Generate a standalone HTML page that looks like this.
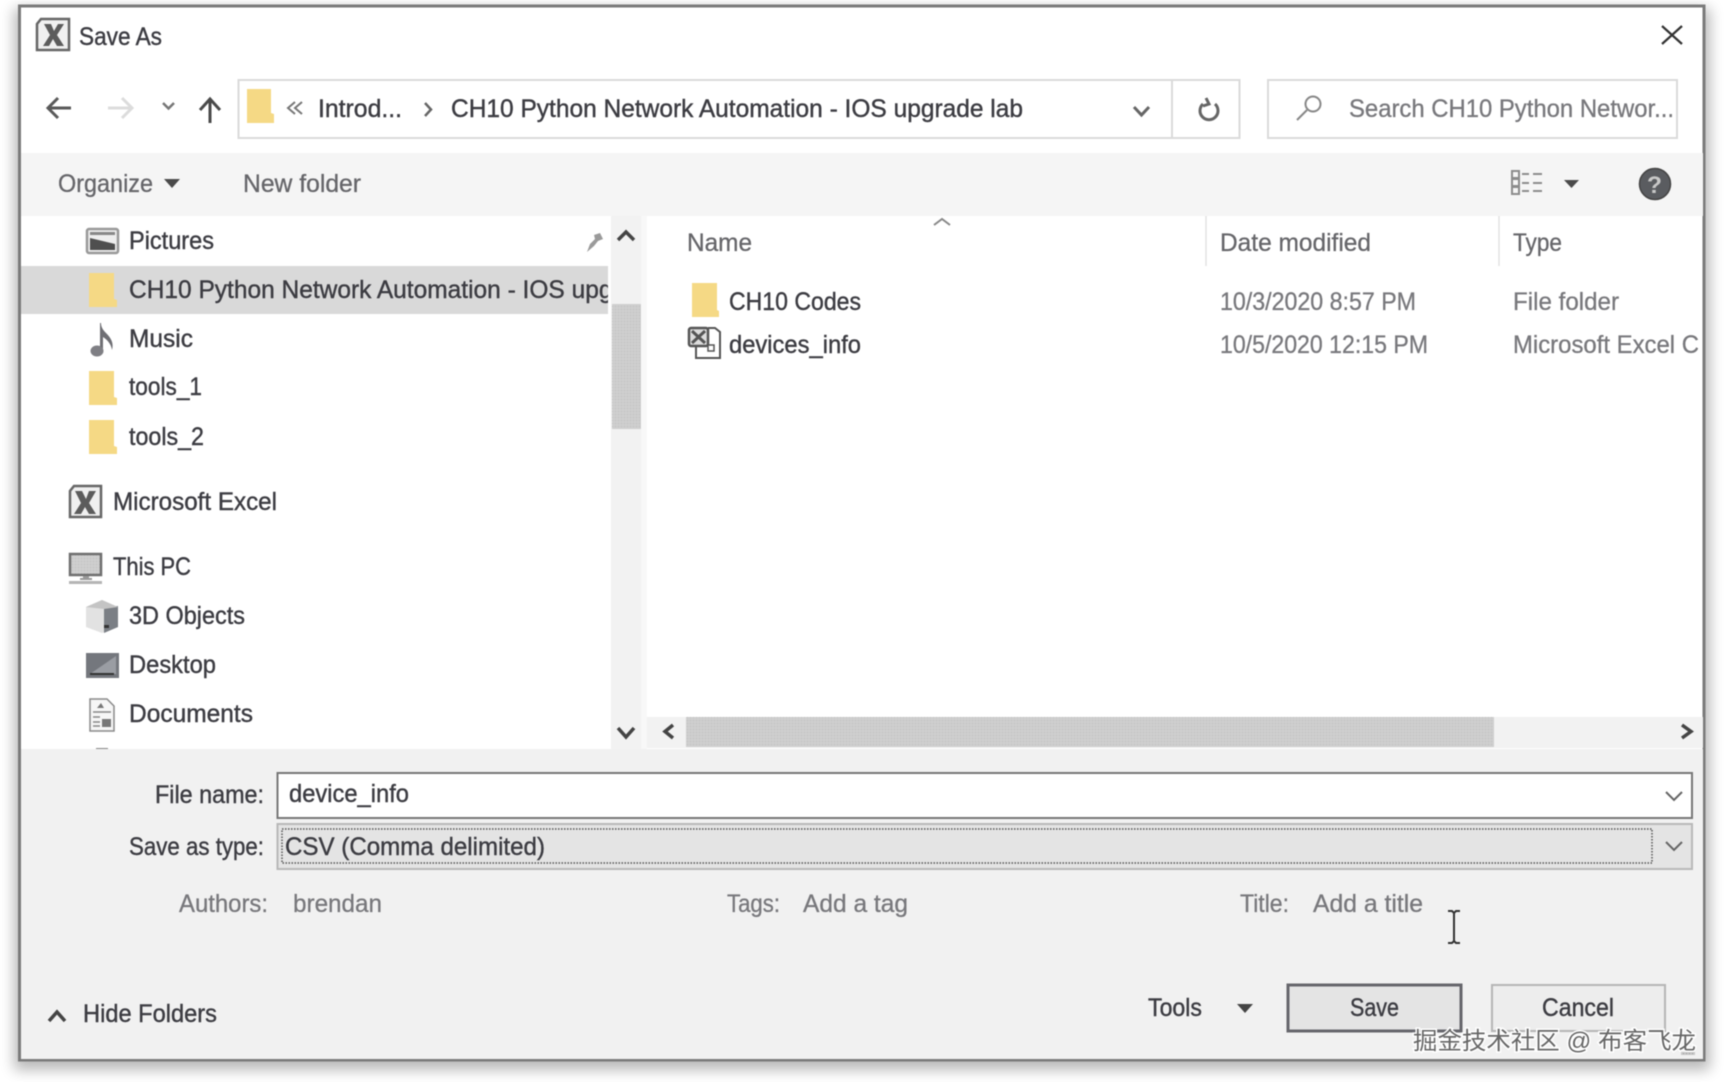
<!DOCTYPE html>
<html><head><meta charset="utf-8"><title>Save As</title>
<style>
html,body{margin:0;padding:0;background:#fff;width:1725px;height:1082px;overflow:hidden}
svg{display:block;filter:blur(.5px)}
text{font-family:"Liberation Sans","Noto Sans CJK SC",sans-serif;font-size:25px;fill:#3c3c42;stroke:#3c3c42;stroke-width:.4px}
.g{fill:#78787c;stroke:#78787c;stroke-width:.3px}
.h{fill:#66666a;stroke:#66666a;stroke-width:.3px}
.c{fill:none;stroke:#444;stroke-width:3.500}
.f{fill:#f5d985}
</style></head><body>
<svg width="1725" height="1082" viewBox="0 0 1725 1082" xmlns="http://www.w3.org/2000/svg">
<defs>
<filter id="sh" x="-5%" y="-5%" width="110%" height="110%"><feGaussianBlur stdDeviation="7"/></filter>
<clipPath id="side"><rect x="21" y="216" width="587" height="533"/></clipPath>
<clipPath id="right"><rect x="1500" y="216" width="198" height="500"/></clipPath>
<pattern id="dots" width="3" height="3" patternUnits="userSpaceOnUse"><rect width="3" height="3" fill="#cfcfcf"/><rect width="1" height="1" fill="#bdbdbd"/></pattern>
<pattern id="dk" width="3" height="3" patternUnits="userSpaceOnUse"><rect width="3" height="3" fill="#c8c8c8"/><rect width="1" height="1" fill="#999"/></pattern>
</defs>

<!-- shadow -->
<rect x="14" y="8" width="1696" height="1062" fill="#000" opacity=".28" filter="url(#sh)"/>
<!-- dialog -->
<rect x="19.500" y="6" width="1684.500" height="1054" fill="#fff" stroke="#7a7a7a" stroke-width="3"/>
<!-- toolbar -->
<rect x="21" y="153" width="1682" height="63" fill="#f5f5f5"/>
<!-- footer -->
<rect x="21" y="749" width="1682" height="310" fill="#f1f1f1"/>
<rect x="641" y="216" width="6" height="533" fill="#f8f8f8"/>

<!-- title -->
<path d="M41 19h28v31H37V24z" fill="#f0f0f0" stroke="#666" stroke-width="2.500"/>
<path d="M44 24h7l3 7 4-7h6l-7 11 7 11h-7l-4-7-4 7h-6l7-11z" fill="#5c5c5c"/>
<text x="79" y="45" textLength="83" lengthAdjust="spacingAndGlyphs">Save As</text>
<path d="M1662 26l20 18M1682 26l-20 18" fill="none" stroke="#333" stroke-width="2.200"/>

<!-- nav -->
<path d="M71 108H49M58 98l-10 10 10 10" fill="none" stroke="#5a5a5a" stroke-width="3"/>
<path d="M108 108h23M122 98l10 10-10 10" fill="none" stroke="#dcdcdc" stroke-width="3"/>
<path d="M163 103l5.500 5.500 5.500-5.500" fill="none" stroke="#777" stroke-width="2.500"/>
<path d="M210 123V100M200 110l10-11 10 11" fill="none" stroke="#4a4a4a" stroke-width="3"/>

<!-- address -->
<rect x="238.500" y="80" width="1001" height="58" fill="#fff" stroke="#dadada" stroke-width="2"/>
<line x1="1172" y1="80" x2="1172" y2="138" stroke="#dadada" stroke-width="2"/>
<path class="f" d="M247 89h24v24l3 1v9h-27z"/>
<path d="M295 102l-7 6 7 6M302 102l-7 6 7 6" fill="none" stroke="#777" stroke-width="2"/>
<text x="318" y="117" textLength="84" lengthAdjust="spacingAndGlyphs">Introd...</text>
<path d="M425 103l6 6.500-6 6.500" fill="none" stroke="#666" stroke-width="2.500"/>
<text x="451" y="117" textLength="572" lengthAdjust="spacingAndGlyphs">CH10 Python Network Automation - IOS upgrade lab</text>
<path d="M1134 107l7.500 8 7.500-8" fill="none" stroke="#666" stroke-width="3"/>
<path d="M1203 104a9 9 0 1 0 12 0M1206 98l3 6-6 2" fill="none" stroke="#666" stroke-width="3"/>

<!-- search -->
<rect x="1268" y="80" width="409" height="58" fill="#fff" stroke="#dadada" stroke-width="2"/>
<circle cx="1313" cy="104" r="7.500" fill="none" stroke="#888" stroke-width="2"/>
<path d="M1307 110l-10 10" stroke="#888" stroke-width="2"/>
<text class="g" x="1349" y="117" textLength="325" lengthAdjust="spacingAndGlyphs">Search CH10 Python Networ...</text>

<!-- toolbar items -->
<text x="58" y="192" textLength="95" lengthAdjust="spacingAndGlyphs" class="h">Organize</text>
<path d="M164 179h16l-8 9z" fill="#4a4a4a"/>
<text x="243" y="192" textLength="118" lengthAdjust="spacingAndGlyphs" class="h">New folder</text>
<g fill="none" stroke="#8c8c8c" stroke-width="2"><rect x="1512" y="171" width="7" height="7"/><rect x="1512" y="179" width="7" height="7"/><rect x="1512" y="187" width="7" height="7"/><path d="M1522 174h7M1533 174h9M1522 183h7M1533 183h9M1522 191h7M1533 191h9"/></g>
<path d="M1564 180h15l-7.500 8z" fill="#4a4a4a"/>
<circle cx="1655" cy="184" r="15.500" fill="#5a5c60" stroke="#444" stroke-width="1.500"/>
<text x="1647" y="193" style="font-size:24px;font-weight:bold;fill:#c8c8c8;stroke:none" textLength="15" lengthAdjust="spacingAndGlyphs">?</text>

<!-- sidebar -->
<rect x="21" y="266" width="587" height="48" fill="#d9d9d9"/>
<g clip-path="url(#side)">
<rect x="87" y="229" width="31" height="24" rx="2" fill="#eee" stroke="#999" stroke-width="2.500"/>
<rect x="90" y="232" width="25" height="3" fill="#888"/>
<path d="M90 238l25 6v6H90z" fill="#4f4f4f"/>
<text x="129" y="249" textLength="85" lengthAdjust="spacingAndGlyphs">Pictures</text>
<path d="M600 233l3 6-5 2-4 5-7 6 3-8 5-5-1-4z" fill="#9a9a9a"/>

<path class="f" d="M89 273h25v26l3 1v7H89z"/>
<text x="129" y="298" textLength="572" lengthAdjust="spacingAndGlyphs">CH10 Python Network Automation - IOS upgrade lab</text>

<path d="M101 323c0 4 2 7 5 10 5 5 8 10 6 17-1-7-6-11-9-13v15h-3v-29z" fill="#6f6f74"/>
<ellipse cx="97" cy="351" rx="6.500" ry="5.500" fill="#7f7f84"/>
<text x="129" y="347" textLength="64" lengthAdjust="spacingAndGlyphs">Music</text>

<path class="f" d="M89 371h25v26l3 1v7H89z"/>
<text x="129" y="395" textLength="73" lengthAdjust="spacingAndGlyphs">tools_1</text>
<path class="f" d="M89 420h25v26l3 1v7H89z"/>
<text x="129" y="445" textLength="75" lengthAdjust="spacingAndGlyphs">tools_2</text>

<path d="M74 486h27v31H70v-26z" fill="#f0f0f0" stroke="#666" stroke-width="2.500"/>
<path d="M75 491h7l4 8 3-8h7l-7 12 7 11h-7l-4-7-4 7h-7l7-11z" fill="#5c5c5c"/>
<text x="113" y="510" textLength="164" lengthAdjust="spacingAndGlyphs">Microsoft Excel</text>

<rect x="70" y="554" width="31" height="21" fill="url(#dots)" stroke="#6f6f6f" stroke-width="2.500"/>
<path d="M83 577h6M80 579h12" stroke="#999" stroke-width="2"/><rect x="69" y="581" width="33" height="3" fill="#b5b5b5"/>
<text x="113" y="575" textLength="78" lengthAdjust="spacingAndGlyphs">This PC</text>

<path d="M102 600l16 7v20l-16 6-16-6v-20z" fill="#e2e2e2"/><path d="M104 607l14-1v21l-14 6z" fill="#7b7f85"/><path d="M86 607l16-7 16 7-14 2z" fill="#c4c4c4"/><path d="M104 628h5v-3h-5z" fill="#333"/>
<text x="129" y="624" textLength="116" lengthAdjust="spacingAndGlyphs">3D Objects</text>

<rect x="86" y="653" width="33" height="25" fill="#74777d"/><path d="M90 674l26-18v18z" fill="#9a9da3"/><rect x="90" y="673" width="24" height="2" fill="#333"/>
<text x="129" y="673" textLength="87" lengthAdjust="spacingAndGlyphs">Desktop</text>

<path d="M90 699h17l7 7v25H90z" fill="#f6f6f6" stroke="#8a8a8a" stroke-width="1.500"/>
<path d="M93 712h18M93 717h7M93 722h7M93 726h7" stroke="#888" stroke-width="1.500"/><rect x="102" y="719" width="9" height="8" fill="#777"/><path d="M97 708l4-5 3 5z" fill="#777"/>
<text x="129" y="722" textLength="124" lengthAdjust="spacingAndGlyphs">Documents</text>
<rect x="96" y="748" width="12" height="2" fill="#888"/>
</g>

<!-- vertical scrollbar -->
<rect x="611" y="216" width="30" height="533" fill="#f2f2f2"/>
<rect x="612" y="304" width="29" height="125" fill="url(#dots)"/>
<path class="c" d="M618 240l8-8 8 8"/>
<path class="c" d="M618 728l8 9 8-9"/>

<!-- file list header -->
<path d="M934 225l8-6 8 6" fill="none" stroke="#888" stroke-width="2"/>
<text class="h" x="687" y="251" textLength="65" lengthAdjust="spacingAndGlyphs">Name</text>
<line x1="1206" y1="216" x2="1206" y2="266" stroke="#e2e2e2" stroke-width="1.500"/>
<text class="h" x="1220" y="251" textLength="151" lengthAdjust="spacingAndGlyphs">Date modified</text>
<line x1="1499" y1="216" x2="1499" y2="266" stroke="#e2e2e2" stroke-width="1.500"/>
<text class="h" x="1513" y="251" textLength="49" lengthAdjust="spacingAndGlyphs">Type</text>

<!-- file rows -->
<path class="f" d="M692 283h25v27l2 1v6h-27z"/>
<text x="729" y="310" textLength="132" lengthAdjust="spacingAndGlyphs">CH10 Codes</text>
<text class="g" x="1220" y="310" textLength="196" lengthAdjust="spacingAndGlyphs">10/3/2020 8:57 PM</text>
<text class="g" x="1513" y="310" textLength="106" lengthAdjust="spacingAndGlyphs">File folder</text>

<path d="M696 345v13h24v-26l-5-4h-7" fill="#fff" stroke="#555" stroke-width="2"/>
<rect x="689" y="328" width="19" height="18" rx="2" fill="#ddd" stroke="#555" stroke-width="2.500"/>
<path d="M692 331l13 12M705 331l-13 12" stroke="#555" stroke-width="3"/>
<rect x="708" y="345" width="6" height="6" fill="none" stroke="#555" stroke-width="1.500"/>
<text x="729" y="353" textLength="132" lengthAdjust="spacingAndGlyphs">devices_info</text>
<text class="g" x="1220" y="353" textLength="208" lengthAdjust="spacingAndGlyphs">10/5/2020 12:15 PM</text>
<g clip-path="url(#right)"><text class="g" x="1513" y="353" textLength="186" lengthAdjust="spacingAndGlyphs">Microsoft Excel C</text></g>

<!-- horizontal scrollbar -->
<rect x="647" y="717" width="1056" height="31" fill="#f2f2f2"/>
<rect x="686" y="717" width="808" height="30" fill="url(#dots)"/>
<path class="c" d="M673 725l-8 6.500 8 6.500"/>
<path class="c" d="M1682 725l9 6.500-9 6.500"/>

<!-- form -->
<text x="155" y="803" textLength="109" lengthAdjust="spacingAndGlyphs">File name:</text>
<rect x="277.500" y="773" width="1414.500" height="45" fill="#fff" stroke="#777" stroke-width="2"/>
<text x="289" y="802" textLength="120" lengthAdjust="spacingAndGlyphs">device_info</text>
<path d="M1666 792l8 8 8-8" fill="none" stroke="#666" stroke-width="2"/>

<text x="129" y="855" textLength="135" lengthAdjust="spacingAndGlyphs">Save as type:</text>
<rect x="277.500" y="824" width="1414.500" height="45" fill="#e4e4e4" stroke="#b8b8b8" stroke-width="2"/>
<rect x="282" y="829" width="1370" height="34" fill="none" stroke="#555" stroke-width="1.500" stroke-dasharray="1.500 1.500"/>
<text x="285" y="855" textLength="260" lengthAdjust="spacingAndGlyphs">CSV (Comma delimited)</text>
<path d="M1666 842l8 8 8-8" fill="none" stroke="#666" stroke-width="2"/>

<text class="g" x="179" y="912" textLength="89" lengthAdjust="spacingAndGlyphs">Authors:</text>
<text class="g" x="293" y="912" textLength="89" lengthAdjust="spacingAndGlyphs">brendan</text>
<text class="g" x="727" y="912" textLength="53" lengthAdjust="spacingAndGlyphs">Tags:</text>
<text class="g" x="803" y="912" textLength="105" lengthAdjust="spacingAndGlyphs">Add a tag</text>
<text class="g" x="1240" y="912" textLength="49" lengthAdjust="spacingAndGlyphs">Title:</text>
<text class="g" x="1313" y="912" textLength="110" lengthAdjust="spacingAndGlyphs">Add a title</text>

<path d="M1448 911h4l2 2 2-2h4M1454 913v28M1448 943h4l2-2 2 2h4" fill="none" stroke="#333" stroke-width="2"/>

<!-- bottom -->
<path d="M49 1021l8-9 8 9" fill="none" stroke="#444" stroke-width="3.500"/>
<text x="83" y="1022" textLength="134" lengthAdjust="spacingAndGlyphs">Hide Folders</text>
<text x="1148" y="1016" textLength="54" lengthAdjust="spacingAndGlyphs">Tools</text>
<path d="M1237 1004h16l-8 9z" fill="#444"/>

<rect x="1288" y="985" width="173" height="46" fill="#e4e4e4" stroke="#66666c" stroke-width="3"/>
<text x="1350" y="1016" textLength="49" lengthAdjust="spacingAndGlyphs">Save</text>
<rect x="1492" y="985" width="173" height="46" fill="#ededed" stroke="#b5b5b5" stroke-width="2"/>
<text x="1542" y="1016" textLength="72" lengthAdjust="spacingAndGlyphs">Cancel</text>

<!-- watermark -->
<text x="1413" y="1049" textLength="283" lengthAdjust="spacingAndGlyphs" style="font-size:24px;fill:#666;stroke:#fff;stroke-width:3px;paint-order:stroke">掘金技术社区 @ 布客飞龙</text>
<rect x="1681" y="1052" width="14" height="3" fill="url(#dk)"/>
</svg>
</body></html>
